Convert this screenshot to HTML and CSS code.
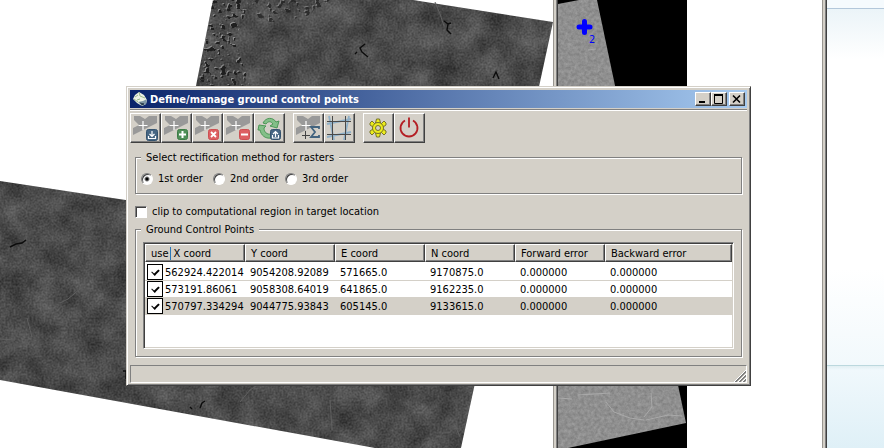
FILE: index.html
```html
<!DOCTYPE html>
<html lang="en">
<head>
    <meta charset="UTF-8">
    <meta name="viewport" content="width=device-width, initial-scale=1.0">
    <title>Define/manage ground control points</title>
    <link rel="stylesheet" href="styles.css">
</head>
<body>
    <!-- map displays -->
    <main class="desktop">
        <div class="pane source">
            <svg class="raster" width="553" height="448" viewBox="0 0 553 448" aria-hidden="true">
                <defs>
                    <filter id="terrain" x="0" y="0" width="100%" height="100%" color-interpolation-filters="sRGB">
                        <feTurbulence type="fractalNoise" baseFrequency="0.5" numOctaves="2" seed="4" result="fine"/>
                        <feColorMatrix in="fine" type="matrix" values="0.4 0 0 0 0.11  0.4 0 0 0 0.11  0.4 0 0 0 0.11  0 0 0 0 1" result="grain"/>
                        <feTurbulence type="fractalNoise" baseFrequency="0.037" numOctaves="5" seed="21"/>
                        <feColorMatrix type="matrix" values="0.5 0 0 0 0.03  0.5 0 0 0 0.03  0.5 0 0 0 0.03  0 0 0 0 1" result="large"/>
                        <feComposite in="grain" in2="large" operator="arithmetic" k2="0.5" k3="0.5"/>
                        <feComposite in2="SourceGraphic" operator="in"/>
                    </filter>
                    <filter id="relief" x="0" y="0" width="100%" height="100%" color-interpolation-filters="sRGB">
                        <feTurbulence type="fractalNoise" baseFrequency="0.19 0.21" numOctaves="2" seed="3"/>
                        <feColorMatrix type="matrix" values="0 0 0 0 0.12  0 0 0 0 0.12  0 0 0 0 0.12  12 0 0 0 -7" result="dark"/>
                        <feOffset in="dark" dx="-1" dy="-1" result="moved"/>
                        <feColorMatrix in="moved" type="matrix" values="0 0 0 0 0.6  0 0 0 0 0.6  0 0 0 0 0.6  0 0 0 0.8 0" result="light"/>
                        <feMerge result="bumps">
                            <feMergeNode in="light"/>
                            <feMergeNode in="dark"/>
                        </feMerge>
                        <feComposite in="bumps" in2="SourceGraphic" operator="in"/>
                    </filter>
                </defs>
                <polygon points="213,0 413,0 553,22 461,448 375,448 0,380 0,181 172,207" fill="#4b4b4b" filter="url(#terrain)"/>
                <polygon points="213,0 250,0 235,40 250,86 197,86" filter="url(#relief)"/>
                <polygon points="250,0 330,0 310,16 262,24" filter="url(#relief)" opacity="0.7"/>
                <g fill="none" stroke="#0c0c0c" stroke-width="1.4">
                    <path d="M365 44l-5 4 2 4 6 5M355 54l2-2M444 21l4 3-1 6 4 4M448 24l3-1M493 78l3-6 3 7"/>
                    <path d="M10 247l6-3 6-1 4-3M200 408l2-5 3-2M190 407l2 2M123 371h3v8"/>
                </g>
                <g fill="none" stroke="#606060" stroke-width="1">
                    <path d="M435 2l5 12 4 12M60 303l8-4 13-11M27 318l5 19M0 339l15 1M240 402l10-12 12-8M330 400l2 30M455 425l5 12"/>
                </g>
            </svg>
        </div>
        <div class="splitter"></div>
        <div class="pane target">
            <svg class="raster" width="129" height="448" viewBox="0 0 129 448">
                <defs>
                    <filter id="haze" x="0" y="0" width="100%" height="100%" color-interpolation-filters="sRGB">
                        <feTurbulence type="fractalNoise" baseFrequency="0.3" numOctaves="3" seed="7"/>
                        <feColorMatrix type="matrix" values="0.18 0 0 0 0.47  0.18 0 0 0 0.47  0.18 0 0 0 0.47  0 0 0 0 1"/>
                        <feComposite in2="SourceGraphic" operator="in"/>
                    </filter>
                </defs>
                <rect width="129" height="448" fill="#000"/>
                <polygon points="0,4 21,0 39,0 128,423 10,448 0,448" fill="#919191" filter="url(#haze)"/>
                <path d="M0 398l14 1M20 395l32-2M48 402l8 10 16 6 14 2M93 393l1 14-8 10M88 420l22-5 14 1M30 50l8-1" fill="none" stroke="#aaa"/>
                <path d="M21 27h11M26.500 21.500v11" stroke="#00f" stroke-width="5" stroke-linecap="round"/>
                <text class="gcp-label" x="31" y="43">2</text>
            </svg>
        </div>
        <div class="splitter"></div>
        <aside class="side">
            <div class="side-top"></div>
            <div class="side-body"></div>
            <div class="side-bottom"></div>
        </aside>
    </main>

    <!-- toolbar symbols -->
    <svg class="symbols" aria-hidden="true">
        <symbol id="band" viewBox="0 0 26 26">
            <path d="M17 1h8v7L1 20v-7l6-3-5-5V1h6l5 3z" fill="#999"/>
            <path d="M11 6v9M6.500 10.500h9" stroke="#fff" stroke-width="1.200"/>
        </symbol>
        <symbol id="save" viewBox="0 0 12 12">
            <rect x=".5" y=".5" width="11" height="11" rx="2" fill="#466683" stroke="#35536e"/>
            <path d="M6 2v5M3.500 5L6 7.500 8.500 5M2.500 7v2.500h7V7" fill="none" stroke="#fff" stroke-width="1.200"/>
        </symbol>
    </svg>

    <div class="window" role="dialog" aria-labelledby="title">
        <div class="titlebar">
            <svg class="logo" width="16" height="16" viewBox="0 0 16 16" aria-hidden="true">
                <path d="M7 1l5 3 3 5-1 4-4 2-5-3-4-4 2-4z" fill="#eef3e4"/>
                <path d="M7 1l1 4 5 2M3 6l3-2M5 9l3-1M2 8l4 3" fill="none" stroke="#9cb98c"/>
                <path d="M6 11l5-1 4-2-1 5-4 2z" fill="#7f98a5"/>
                <path d="M8 12l4 1M9 14l3-1" stroke="#263a4a"/>
            </svg>
            <h1 id="title">Define/manage ground control points</h1>
            <div class="controls">
                <button class="control" aria-label="Minimize"><svg width="12" height="10"><path d="M2 8h6" stroke="#000" stroke-width="2"/></svg></button>
                <button class="control" aria-label="Maximize"><svg width="12" height="10"><path d="M1.500 1v8.500h8V1" fill="none" stroke="#000"/><path d="M1 1h9" stroke="#000" stroke-width="2"/></svg></button>
                <button class="control close" aria-label="Close"><svg width="12" height="10"><path d="M2 1.500l7 7M9 1.500l-7 7" stroke="#000" stroke-width="1.600"/></svg></button>
            </div>
        </div>

        <div class="toolbar" role="toolbar">
            <div class="tools">
                <button class="tool" aria-label="Save GCPs"><svg width="26" height="26"><use href="#band" width="26" height="26"/><use href="#save" x="14" y="14" width="12" height="12"/></svg></button>
                <button class="tool" aria-label="Add GCP"><svg width="26" height="26"><use href="#band" width="26" height="26"/><rect x="14.500" y="14.500" width="10" height="10" rx="2" fill="#4f8f57" stroke="#3d7c46"/><path d="M19.500 16v7M16 19.500h7" stroke="#fff" stroke-width="2"/></svg></button>
                <button class="tool" aria-label="Delete GCP"><svg width="26" height="26"><use href="#band" width="26" height="26"/><rect x="14.500" y="14.500" width="10" height="10" rx="2" fill="#dd5f62" stroke="#cc4f52"/><path d="M17 17l5 5M22 17l-5 5" stroke="#fff" stroke-width="1.800"/></svg></button>
                <button class="tool" aria-label="Clear GCP"><svg width="26" height="26"><use href="#band" width="26" height="26"/><rect x="14.500" y="14.500" width="10" height="10" rx="2" fill="#dd5f62" stroke="#cc4f52"/><path d="M16 19.500h7" stroke="#fff" stroke-width="2"/></svg></button>
                <button class="tool" aria-label="Reload GCPs"><svg width="26" height="26">
                    <path d="M7 8c3-6 10-6 13-1l3-1-2 7-7-2 3-2c-2-3-5-3-7 0z" fill="#83bf88" stroke="#4d9757"/>
                    <path d="M3 10l7 1-2 2c0 4 3 7 7 6v4c-6 1-10-3-11-8H2z" fill="#83bf88" stroke="#4d9757"/>
                    <rect x="14.500" y="14.500" width="10" height="10" rx="2" fill="#466683" stroke="#35536e"/>
                    <path d="M19.500 22v-5M17 19l2.500-2.500L22 19M16.500 20v3h6v-3" fill="none" stroke="#fff" stroke-width="1.200"/>
                </svg></button>
            </div>
            <div class="tools">
                <button class="tool" aria-label="Calculate RMS error"><svg width="26" height="26"><use href="#band" width="26" height="26"/><path d="M10.500 16v8M7 20.500h8" stroke="#444"/><path d="M24 14v-2h-8l4 5-4 5h8v-2" fill="none" stroke="#43647f" stroke-width="1.800"/></svg></button>
                <button class="tool" aria-label="Georectify"><svg width="26" height="26">
                    <path d="M3 1l5 24M18 25l5-24M1 9L25 4M1 22l24-5" fill="none" stroke="#8fb0c8" stroke-width="1.800"/>
                    <path d="M6.500 1v24M19.500 1v24M1 6.500h24M1 19.500h24" fill="none" stroke="#4a4a4a"/>
                </svg></button>
            </div>
            <div class="tools">
                <button class="tool" aria-label="Settings"><svg width="26" height="26">
                    <g fill="#ecec1d" stroke="#77742a">
                        <path d="M11.500 4h3l1 4h-5zM11.500 22h3l1-4h-5zM5 8l2-2 4 4-3 2-3-2zM21 8l-2-2-4 4 3 2 3-2zM5 18l2 2 4-4-3-2-3 2zM21 18l-2 2-4-4 3-2 3 2z"/>
                        <circle cx="13" cy="13" r="5.500"/>
                        <circle cx="13" cy="13" r="2.500" fill="#d4d0c8"/>
                    </g>
                </svg></button>
                <button class="tool" aria-label="Quit"><svg width="26" height="26"><path d="M9 5.500a8.500 8.500 0 1 0 8 0M13 2.500v10" fill="none" stroke="#b41f24" stroke-width="1.800"/></svg></button>
            </div>
        </div>

        <form class="content">
            <fieldset class="group method">
                <legend>Select rectification method for rasters</legend>
                <label class="choice"><input type="radio" name="order" checked>1st order</label>
                <label class="choice"><input type="radio" name="order">2nd order</label>
                <label class="choice"><input type="radio" name="order">3rd order</label>
            </fieldset>

            <label class="clip"><input type="checkbox">clip to computational region in target location</label>

            <fieldset class="group points">
                <legend>Ground Control Points</legend>
                <div class="list">
                    <table>
                        <colgroup>
                            <col class="col-first">
                            <col class="col">
                            <col class="col">
                            <col class="col">
                            <col class="col">
                            <col>
                        </colgroup>
                        <thead>
                            <tr>
                                <th><span class="use">use</span>X coord</th>
                                <th>Y coord</th>
                                <th>E coord</th>
                                <th>N coord</th>
                                <th>Forward error</th>
                                <th>Backward error</th>
                            </tr>
                        </thead>
                        <tbody>
                            <tr>
                                <td><label class="row-check"><input type="checkbox" checked>562924.422014</label></td>
                                <td>9054208.92089</td>
                                <td>571665.0</td>
                                <td>9170875.0</td>
                                <td>0.000000</td>
                                <td>0.000000</td>
                            </tr>
                            <tr>
                                <td><label class="row-check"><input type="checkbox" checked>573191.86061</label></td>
                                <td>9058308.64019</td>
                                <td>641865.0</td>
                                <td>9162235.0</td>
                                <td>0.000000</td>
                                <td>0.000000</td>
                            </tr>
                            <tr class="selected">
                                <td><label class="row-check"><input type="checkbox" checked>570797.334294</label></td>
                                <td>9044775.93843</td>
                                <td>605145.0</td>
                                <td>9133615.0</td>
                                <td>0.000000</td>
                                <td>0.000000</td>
                            </tr>
                        </tbody>
                    </table>
                </div>
            </fieldset>
        </form>

        <div class="statusbar">
            <svg width="12" height="12" viewBox="0 0 12 12" aria-hidden="true">
                <path d="M0 12L12 0M4 12l8-8M8 12l4-4" stroke="#fff"/>
                <path d="M1 12L12 1M2 12L12 2M5 12l7-7M6 12l6-6M9 12l3-3M10 12l2-2" stroke="#808080"/>
            </svg>
        </div>
    </div>
</body>
</html>
```
FILE: styles.css
```css
* {
    box-sizing: border-box;
}
body {
    margin: 0;
    background: #fff;
    color: #000;
    font-family: "DejaVu Sans Condensed", Tahoma, sans-serif;
    font-size: 11px;
    line-height: 13px;
}
input, button {
    margin: 0;
    padding: 0;
    font: inherit;
}

/* map displays behind the dialog */
.desktop {
    display: flex;
    height: 100vh;
    overflow: hidden;
}
.pane {
    overflow: hidden;
}
.source {
    flex: 553;
}
.target {
    flex: 264;
}
.raster {
    display: block;
}
.gcp-label {
    fill: #00f;
}
.splitter {
    flex: none;
    width: 5px;
    background: #d4d0c8;
    border-left: 1px solid #999690;
    border-right: 1px solid #404040;
    box-shadow: inset -1px 0 #808080;
}
.side {
    flex: 57;
    display: flex;
    flex-direction: column;
}
.side-top {
    height: 9px;
    background: #f5fafd;
    border-bottom: 1px solid #b3c7da;
}
.side-body {
    flex: 1;
    background: linear-gradient(#ebf4f8, #fff 50px, #fff 260px, #f2f9fc);
}
.side-bottom {
    height: 83px;
    border-top: 1px solid #bcd8de;
    background: linear-gradient(#e2eff2, #f0f8fc 4px, #dff0f7);
}
.symbols {
    position: absolute;
    width: 0;
    height: 0;
}

/* dialog */
.window {
    position: absolute;
    top: 86px;
    left: 126px;
    right: 133px;
    padding: 2px;
    background: #d4d0c8;
    border: 1px solid;
    border-color: #d4d0c8 #404040 #404040 #d4d0c8;
    box-shadow: inset 1px 1px #fff, inset -1px -1px #808080;
}
.titlebar {
    display: flex;
    align-items: center;
    height: 18px;
    margin: 1px;
    padding: 0 2px;
    background: linear-gradient(to right, #0a246a, #a6caf0);
}
.titlebar h1 {
    flex: 1;
    margin: 0 0 0 2px;
    color: #fff;
    font-size: 11px;
}
.controls {
    display: flex;
}
.control {
    width: 16px;
    height: 14px;
    background: #d4d0c8;
    border: 1px solid;
    border-color: #fff #404040 #404040 #fff;
    box-shadow: inset -1px -1px #808080;
}
.control svg {
    display: block;
    margin: 1px;
}
.close {
    margin-left: 2px;
}
.toolbar {
    display: flex;
    gap: 8px;
    margin: 0 1px;
    padding-top: 3px;
    border-top: 1px solid #808080;
    box-shadow: inset 0 1px #fff;
}
.tools {
    display: flex;
}
.tool {
    width: 31px;
    height: 30px;
    background: #d4d0c8;
    border: 1px solid;
    border-color: #fff #404040 #404040 #fff;
    box-shadow: inset -1px -1px #808080;
}
.tool svg {
    display: block;
    margin: 1px;
}
.content {
    padding: 8px 6px;
}
.group {
    min-width: 0;
    margin: 0;
    border: 1px solid #808080;
    box-shadow: 1px 1px #fff, inset 1px 1px #fff;
}
.group legend {
    padding: 0 5px;
    background: #d4d0c8;
}
.method {
    display: flex;
    gap: 12px;
    padding: 8px 5px;
}
.choice, .clip {
    display: flex;
    align-items: center;
    gap: 5px;
}
.choice {
    width: 60px;
    white-space: nowrap;
}
.choice input {
    flex: none;
    appearance: none;
    width: 12px;
    height: 12px;
    border: 1px solid;
    border-color: #808080 #fff #fff #808080;
    border-radius: 50%;
    background: #fff;
    box-shadow: inset 1px 1px #404040;
}
.choice input:checked {
    background: radial-gradient(circle, #000 1px, #fff 3px);
}
.clip {
    margin: 11px 0 5px;
}
.clip input {
    appearance: none;
    width: 12px;
    height: 12px;
    border: 1px solid;
    border-color: #808080 #fff #fff #808080;
    background: #fff;
    box-shadow: inset 1px 1px #404040;
}
.points {
    padding: 6px 7px 7px;
}
.points legend {
    margin-left: -2px;
}
.list {
    height: 107px;
    border: 1px solid;
    border-color: #808080 #fff #fff #808080;
    background: #fff;
    box-shadow: inset 1px 1px #404040, inset -1px -1px #d4d0c8;
    padding: 1px;
}
.list table {
    width: 100%;
    table-layout: fixed;
    border-collapse: separate;
    border-spacing: 0;
}
.col-first {
    width: 100px;
}
.col {
    width: 90px;
}
.list th {
    height: 18px;
    padding: 0 5px;
    border: 1px solid;
    border-color: #fff #404040 #404040 #fff;
    background: #d4d0c8;
    box-shadow: inset -1px -1px #808080;
    font-weight: normal;
    text-align: left;
}
.list thead::after {
    content: "";
    display: block;
    height: 2px;
}
.list td {
    height: 17px;
    padding: 0 5px;
    border-bottom: 1px solid #d4d0c8;
}
.list td:first-child {
    padding: 0 2px;
}
.use {
    margin-right: 3px;
    padding-right: 1px;
    border-right: 1px solid #2a78b8;
}
.selected td {
    background: #d4d0c8;
}
.row-check {
    display: flex;
    align-items: center;
    gap: 2px;
}
.row-check input {
    appearance: none;
    width: 16px;
    height: 16px;
    border: 1px solid #000;
    background: #fff;
}
.row-check input:checked::after {
    content: "";
    display: block;
    width: 6px;
    height: 3px;
    margin: 4px;
    border-left: 1px solid #000;
    border-bottom: 2px solid #000;
    transform: rotate(-45deg);
}
.statusbar {
    display: flex;
    justify-content: flex-end;
    align-items: flex-end;
    height: 18px;
    margin: 0 1px;
    border: 1px solid;
    border-color: #808080 #fff #fff #808080;
}
```
